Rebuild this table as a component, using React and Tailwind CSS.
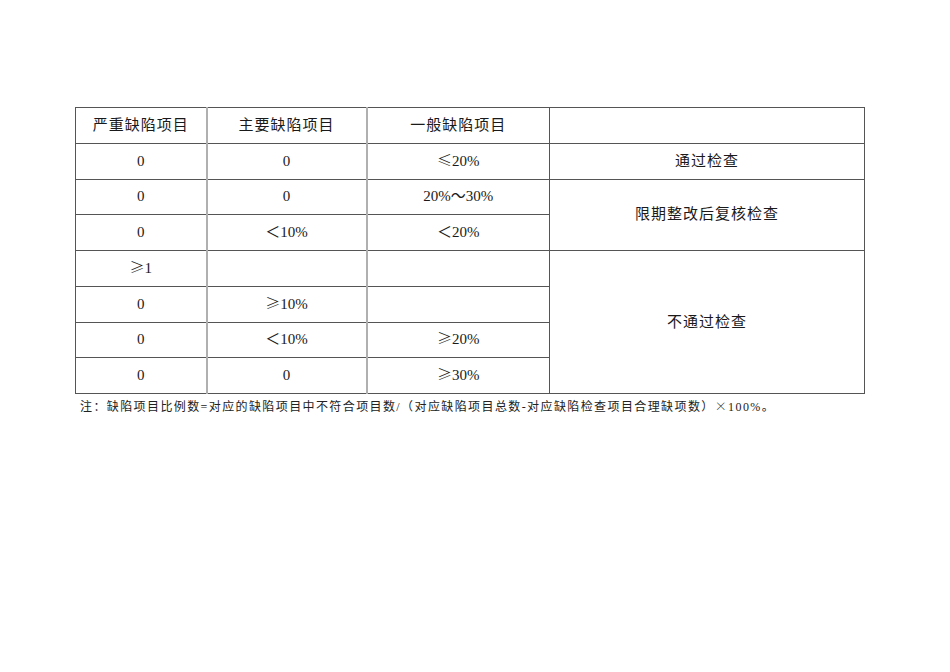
import React from 'react'

const Sign = ({ children }) => (
  <span style={{ fontFamily: '"Noto Sans CJK SC", sans-serif' }} className="font-light leading-[0]">
    {children}
  </span>
);

const rows = [
  { a: "0", b: "0", c: <><Sign>≤</Sign>20%</> },
  { a: "0", b: "0", c: "20%～30%" },
  { a: "0", b: "＜10%", c: "＜20%" },
  { a: <><Sign>≥</Sign>1</>, b: "", c: "" },
  { a: "0", b: <><Sign>≥</Sign>10%</>, c: "" },
  { a: "0", b: "＜10%", c: <><Sign>≥</Sign>20%</> },
  { a: "0", b: "0", c: <><Sign>≥</Sign>30%</> },
];

const result = {
  0: { text: "通过检查", span: 1 },
  1: { text: "限期整改后复核检查", span: 2 },
  3: { text: "不通过检查", span: 4 },
};

const App = () => {
  const cell = "h-[35.75px] p-0 text-center align-middle border-t border-t-[#555]";
  const grayR = "border-r-2 border-r-[#b0b0b0]";

  return (
    <div
      className="min-h-[672px] w-[950px] bg-white pt-[107px] pl-[75px] text-[#1a1a1a]"
      style={{ fontFamily: '"Liberation Serif", "Noto Sans CJK SC", serif' }}
    >
      <table className="w-[789px] table-fixed border-collapse border border-[#555] text-[15px] leading-none">
        <colgroup>
          <col className="w-[131px]" />
          <col className="w-[160px]" />
          <col className="w-[183px]" />
          <col className="w-[315px]" />
        </colgroup>
        <tbody>
          <tr>
            <td className={`${cell} ${grayR} tracking-[1px]`}>严重缺陷项目</td>
            <td className={`${cell} ${grayR} tracking-[1px]`}>主要缺陷项目</td>
            <td className={`${cell} border-r border-r-[#555] tracking-[1px]`}>一般缺陷项目</td>
            <td className={cell}></td>
          </tr>
          {rows.map((r, i) => (
            <tr key={i}>
              <td className={`${cell} ${grayR}`}>{r.a}</td>
              <td className={`${cell} ${grayR}`}>{r.b}</td>
              <td className={`${cell} border-r border-r-[#555]`}>{r.c}</td>
              {result[i] && (
                <td rowSpan={result[i].span} className={`${cell} tracking-[1px]`}>
                  {result[i].text}
                </td>
              )}
            </tr>
          ))}
        </tbody>
      </table>
      <p className="mt-[7px] pl-[5px] text-[12px] leading-none tracking-[1.4px] text-[#222]">
        注：缺陷项目比例数=对应的缺陷项目中不符合项目数/（对应缺陷项目总数-对应缺陷检查项目合理缺项数）<Sign>×</Sign>100%。
      </p>
    </div>
  );
};

export default App
